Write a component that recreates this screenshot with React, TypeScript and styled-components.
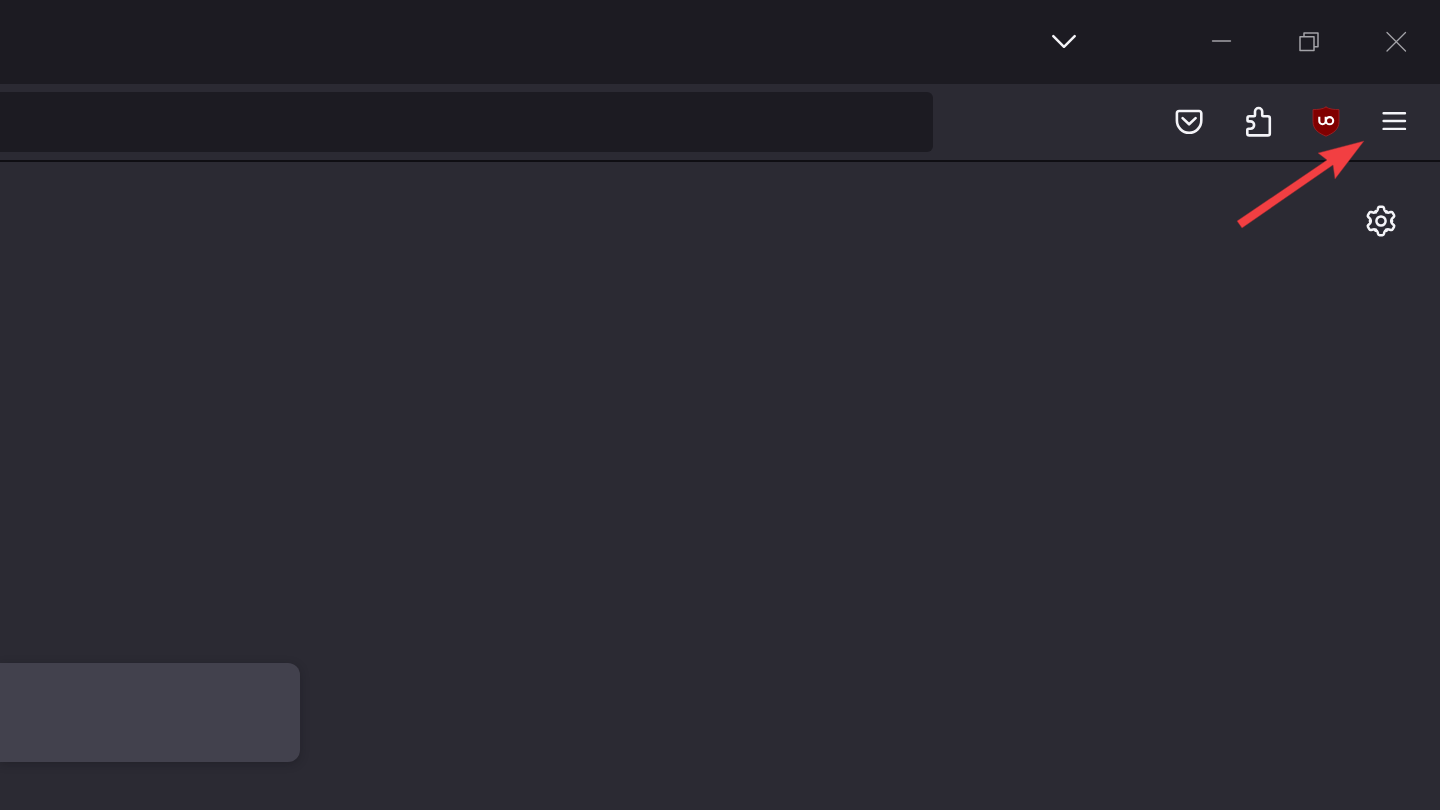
import React from "react";
import styled, { createGlobalStyle } from "styled-components";

const GlobalStyle = createGlobalStyle`
  *, *::before, *::after { box-sizing: border-box; }
  body {
    margin: 0;
    background: #2b2a33;
    font-family: "Open Sans", "Liberation Sans", sans-serif;
  }
`;

const Browser = styled.div`
  position: relative;
  display: flex;
  flex-direction: column;
  min-height: 100vh;
  overflow: hidden;
  background: #2b2a33;
  color: #f4f4f8;
`;

const TitleBar = styled.header`
  display: flex;
  justify-content: flex-end;
  height: 84px;
  background: #1c1b22;
`;

const TabListArea = styled.div`
  display: flex;
  padding-right: 68px;
`;

const WindowControls = styled.div`
  display: flex;
  color: #a3a3a8;
`;

const IconButton = styled.button<{ $width: number }>`
  display: flex;
  align-items: center;
  justify-content: center;
  width: ${({ $width }) => $width}px;
  padding: 0;
  border: 0;
  background: transparent;
  color: inherit;
`;

const Toolbar = styled.nav`
  display: flex;
  justify-content: space-between;
  gap: 223px;
  padding: 8px 12px 8px 0;
  border-bottom: 2px solid #0f0e13;
`;

const AddressField = styled.input`
  flex: 1;
  min-width: 0;
  height: 60px;
  padding: 0 24px;
  border: 0;
  border-radius: 0 6px 6px 0;
  background: #1c1b22;
  color: inherit;
  font: inherit;
  font-size: 24px;
`;

const ToolbarActions = styled.div`
  display: flex;
`;

const NewTabPage = styled.main`
  display: flex;
  flex: 1;
  flex-direction: column;
  align-items: flex-start;
  padding: 32px 32px 48px 0;
`;

const PageActions = styled.div`
  display: flex;
  align-self: flex-end;
  height: 54px;
`;

const SearchBox = styled.input`
  width: 300px;
  height: 99px;
  margin-top: auto;
  padding: 0 24px;
  border: 0;
  border-radius: 0 12px 12px 0;
  background: #42414d;
  box-shadow: 0 2px 8px rgba(20, 19, 26, 0.35);
  color: inherit;
  font: inherit;
  font-size: 24px;
`;

const Pointer = styled.svg`
  position: absolute;
  top: 136px;
  right: 72px;
  pointer-events: none;
`;

const Icon = ({
  children,
  stroke = 2.6,
  viewBox = "0 0 32 32",
}: {
  children: React.ReactNode;
  stroke?: number;
  viewBox?: string;
}) => (
  <svg
    width="32"
    height="32"
    viewBox={viewBox}
    fill="none"
    stroke="currentColor"
    strokeWidth={stroke}
    strokeLinecap="round"
    strokeLinejoin="round"
    aria-hidden="true"
  >
    {children}
  </svg>
);

const cogAngles = [0, 60, 120, 180, 240, 300];

export default function App() {
  return (
    <Browser>
      <GlobalStyle />
      <TitleBar>
        <TabListArea>
          <IconButton $width={88} type="button" aria-label="List all tabs">
            <Icon stroke={2.5}>
              <path d="M5.3 10.2 16 20.8 26.7 10.2" />
            </Icon>
          </IconButton>
        </TabListArea>
        <WindowControls>
          <IconButton $width={88} type="button" aria-label="Minimize">
            <Icon stroke={1.6}>
              <path d="M8.6 15H26.4" />
            </Icon>
          </IconButton>
          <IconButton $width={88} type="button" aria-label="Restore">
            <Icon stroke={1.5}>
              <path d="M8 10.7H22V24.6H8ZM12 10.7V6.9H26V20.8H22" />
            </Icon>
          </IconButton>
          <IconButton $width={88} type="button" aria-label="Close">
            <Icon stroke={1.3}>
              <path d="M7 6.5 25.5 25M25.5 6.5 7 25" />
            </Icon>
          </IconButton>
        </WindowControls>
      </TitleBar>

      <Toolbar aria-label="Navigation">
        <AddressField type="text" aria-label="Address" />
        <ToolbarActions>
          <IconButton $width={68} type="button" aria-label="Save to Pocket">
            <Icon viewBox="1 0 32 32">
              <path d="M6.2 5H26a2.3 2.3 0 0 1 2.3 2.3V14.6a12.2 12.2 0 0 1-24.4 0V7.3A2.3 2.3 0 0 1 6.2 5Z" />
              <path d="M9.6 12.1 16.1 18.3 22.6 12.1" />
            </Icon>
          </IconButton>
          <IconButton $width={68} type="button" aria-label="Extensions">
            <Icon viewBox="-1 0 32 32">
              <path d="M6.3 10.3H11q1 0 1-1V5.6a3.6 3.6 0 0 1 7.2 0V9.3q0 1 1 1H24.8a2 2 0 0 1 2 2V27.4a2 2 0 0 1-2 2H6.3a2 2 0 0 1-2-2V24q0-1.2 1.2-1.2H7.4a3.7 3.7 0 0 0 0-7.4H5.5q-1 0-1-1V12.1a1.8 1.8 0 0 1 1.8-1.8Z" />
            </Icon>
          </IconButton>
          <IconButton $width={68} type="button" aria-label="uBlock Origin">
            <Icon stroke={2.1}>
              <path
                d="M16 1.1C12.4 3.3 7.7 3.6 3 3.6V15.6C3 23.8 9.2 27.4 16 30.2 22.8 27.4 29 23.8 29 15.6V3.6C24.3 3.6 19.6 3.3 16 1.1Z"
                fill="#800000"
                stroke="#a32226"
                strokeWidth="0.8"
              />
              <path
                d="M9.3 10.8V15.2a3.2 3 0 0 0 6.4 0V10.8"
                stroke="#fff"
                strokeLinecap="butt"
              />
              <circle cx="19.6" cy="14.7" r="3.6" stroke="#fff" />
            </Icon>
          </IconButton>
          <IconButton $width={68} type="button" aria-label="Open application menu">
            <Icon stroke={2.4}>
              <path d="M5.6 7.2H27M5.6 15H27M5.6 22.9H27" />
            </Icon>
          </IconButton>
        </ToolbarActions>
      </Toolbar>

      <NewTabPage>
        <PageActions>
          <IconButton $width={54} type="button" aria-label="Personalize new tab">
            <Icon viewBox="-16 -16 32 32" stroke={2.5}>
              {cogAngles.map((angle) => (
                <path
                  key={angle}
                  transform={`rotate(${angle})`}
                  d="M-5.1-8.83-6-9.3Q-4-8.9-3.4-11L-2.9-13Q-2.6-14.2-1.5-14.2H1.5Q2.6-14.2 2.9-13L3.4-11Q4-8.9 6-9.3L5.1-8.83"
                />
              ))}
              <circle r="4.6" />
            </Icon>
          </IconButton>
        </PageActions>
        <SearchBox type="text" aria-label="Search the web" />
      </NewTabPage>

      <Pointer width="136" height="96" viewBox="0 0 136 96" aria-hidden="true">
        <path
          d="M132 5 86 17 95 24 5 85 10 92 101 29 103 43Z"
          fill="#f23f42"
          stroke="#8f2c33"
          strokeWidth="0.5"
        />
      </Pointer>
    </Browser>
  );
}
